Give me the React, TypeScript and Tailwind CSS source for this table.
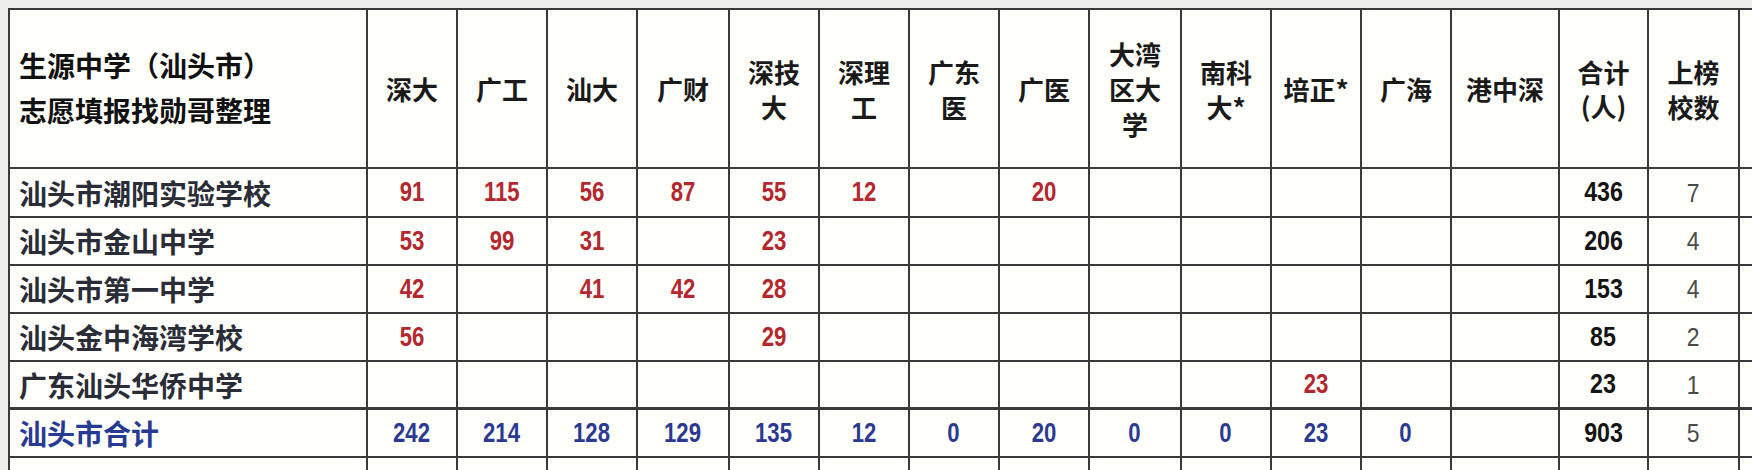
import React from "react";

type Row = {
  name: string;
  values: (number | null)[];
  total: number;
  count: number;
};

const headers: React.ReactNode[] = [
  "深大",
  "广工",
  "汕大",
  "广财",
  <>深技<br />大</>,
  <>深理<br />工</>,
  <>广东<br />医</>,
  "广医",
  <>大湾<br />区大<br />学</>,
  <>南科<br />大*</>,
  "培正*",
  "广海",
  "港中深",
];

const rows: Row[] = [
  { name: "汕头市潮阳实验学校", values: [91, 115, 56, 87, 55, 12, null, 20, null, null, null, null, null], total: 436, count: 7 },
  { name: "汕头市金山中学", values: [53, 99, 31, null, 23, null, null, null, null, null, null, null, null], total: 206, count: 4 },
  { name: "汕头市第一中学", values: [42, null, 41, 42, 28, null, null, null, null, null, null, null, null], total: 153, count: 4 },
  { name: "汕头金中海湾学校", values: [56, null, null, null, 29, null, null, null, null, null, null, null, null], total: 85, count: 2 },
  { name: "广东汕头华侨中学", values: [null, null, null, null, null, null, null, null, null, null, 23, null, null], total: 23, count: 1 },
];

const sumRow: Row = {
  name: "汕头市合计",
  values: [242, 214, 128, 129, 135, 12, 0, 20, 0, 0, 23, 0, null],
  total: 903,
  count: 5,
};

const cjk = "font-['Noto_Sans_CJK_SC',sans-serif] font-bold";
const num = "font-['Liberation_Sans',Arial,sans-serif] font-bold";
const cell = "bg-[#fefefa] flex items-center justify-center";

const Num = ({ v, color }: { v: number | null; color: string }) =>
  v === null ? null : (
    <span className={`inline-block scale-x-[0.82] text-[27px] leading-none ${num} ${color}`}>{v}</span>
  );

const App = () => {
  return (
    <div className="w-[1752px] h-[470px] overflow-hidden bg-[#eeeeec] pt-[8px] pl-[8px]">
      <div className="grid w-max gap-[2px] p-[2px] bg-[#3a3a3a] grid-cols-[356px_88px_88px_88px_90px_88px_88px_88px_88px_90px_88px_88px_88px_106px_87px_89px_60px] grid-rows-[157px_47px_46px_46px_46px_45px_47px_42px]">
        {/* header */}
        <div className={`bg-[#fefefa] flex items-center pl-[9px] pb-[2px] text-[28px] leading-[45px] text-[#111] ${cjk}`}>
          <div>
            生源中学（汕头市）
            <br />
            志愿填报找勋哥整理
          </div>
        </div>
        {headers.map((h, i) => (
          <div key={i} className={`${cell} text-center text-[26px] leading-[35px] text-[#1a1a1a] ${cjk}`}>
            <div>{h}</div>
          </div>
        ))}
        <div className={`${cell} text-center text-[26px] leading-[34px] text-[#1a1a1a] ${cjk}`}>
          <div>
            合计
            <br />
            (人)
          </div>
        </div>
        <div className={`${cell} text-center text-[26px] leading-[35px] text-[#1a1a1a] ${cjk}`}>
          <div>
            上榜
            <br />
            校数
          </div>
        </div>
        <div className="bg-[#fefefa]" />

        {/* school rows */}
        {rows.map((r) => (
          <React.Fragment key={r.name}>
            <div className={`bg-[#fefefa] flex items-center pl-[9px] text-[28px] leading-none text-[#2a2d38] ${cjk}`}>
              {r.name}
            </div>
            {r.values.map((v, i) => (
              <div key={i} className={cell}>
                <Num v={v} color="text-[#b3272f]" />
              </div>
            ))}
            <div className={cell}>
              <span className={`inline-block scale-x-[0.86] text-[27px] leading-none ${num} text-[#141414]`}>{r.total}</span>
            </div>
            <div className={cell}>
              <span className="inline-block scale-x-[0.88] text-[26px] leading-none font-['Liberation_Sans',Arial,sans-serif] text-[#4a4a4a]">
                {r.count}
              </span>
            </div>
            <div className="bg-[#fefefa]" />
          </React.Fragment>
        ))}

        {/* total row */}
        <div className={`bg-[#fefefa] border-t border-[#3a3a3a] flex items-center pl-[9px] text-[28px] leading-none text-[#283b93] ${cjk}`}>
          {sumRow.name}
        </div>
        {sumRow.values.map((v, i) => (
          <div key={i} className={`${cell} border-t border-[#3a3a3a]`}>
            <Num v={v} color="text-[#2b3990]" />
          </div>
        ))}
        <div className={`${cell} border-t border-[#3a3a3a]`}>
          <span className={`inline-block scale-x-[0.86] text-[27px] leading-none ${num} text-[#141414]`}>{sumRow.total}</span>
        </div>
        <div className={`${cell} border-t border-[#3a3a3a]`}>
          <span className="inline-block scale-x-[0.88] text-[26px] leading-none font-['Liberation_Sans',Arial,sans-serif] text-[#4a4a4a]">
            {sumRow.count}
          </span>
        </div>
        <div className="bg-[#fefefa] border-t border-[#3a3a3a]" />

        {/* next row, cut off */}
        {Array.from({ length: 17 }).map((_, i) => (
          <div key={i} className="bg-[#fefefa]" />
        ))}
      </div>
    </div>
  );
};

export default App;
